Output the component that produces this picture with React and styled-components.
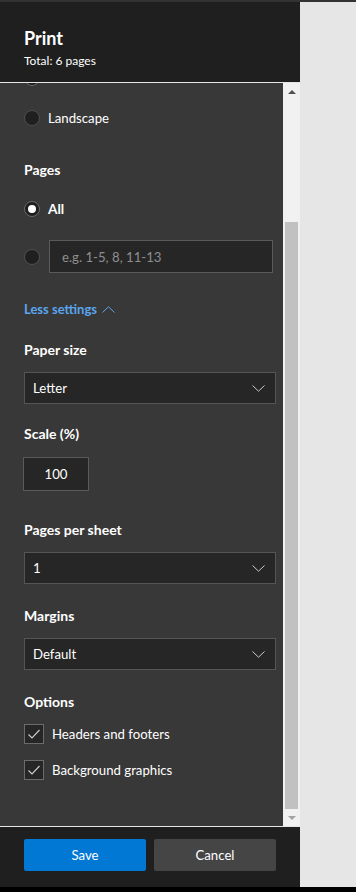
import React from 'react';
import styled, { createGlobalStyle } from 'styled-components';

const Global = createGlobalStyle`
  html, body { margin: 0; padding: 0; background: #e6e6e6; }
  body { font-family: Lato, "Open Sans", sans-serif; color: #fff; }
  * { box-sizing: border-box; }
`;

const TEXT = '13.2px';

const Frame = styled.div`
  width: 356px;
  height: 892px;
  display: flex;
  flex-direction: column;
  overflow: hidden;
`;

const TopStrip = styled.div`
  height: 2px;
  background: #333333;
  flex: none;
`;

const BottomStrip = styled.div`
  height: 5px;
  background: #000;
  flex: none;
`;

const Main = styled.div`
  flex: 1;
  display: flex;
  min-height: 0;
`;

const Panel = styled.div`
  width: 300px;
  flex: none;
  display: flex;
  flex-direction: column;
  background: #383838;
`;

const Backdrop = styled.div`
  flex: 1;
  background: #e6e6e6;
`;

const Header = styled.header`
  height: 80px;
  flex: none;
  background: #1f1f1f;
  padding: 24px 24px 12px;
  display: flex;
  flex-direction: column;
  gap: 3px;
`;

const Title = styled.h1`
  margin: 0;
  font-size: 18px;
  line-height: 24px;
  font-weight: 700;
  color: #fff;
`;

const Subtitle = styled.div`
  font-size: 12px;
  line-height: 16px;
  color: #fff;
`;

const Divider = styled.div`
  height: 1px;
  flex: none;
  background: #e6e6e6;
`;

const Body = styled.div`
  height: 743px;
  flex: none;
  display: flex;
`;

const Viewport = styled.div`
  flex: 1;
  overflow: hidden;
  display: flex;
  flex-direction: column;
  justify-content: flex-end;
  padding: 0 7px 46px 24px;
`;

const Heading = styled.h2`
  margin: ${p => p.$mt || 0}px 0 0;
  font-size: 14px;
  line-height: 20px;
  font-weight: 700;
  color: #fff;
  flex: none;
`;

const RadioRow = styled.label`
  margin-top: ${p => p.$mt || 0}px;
  height: ${p => p.$h || 32}px;
  display: flex;
  align-items: center;
  gap: ${p => p.$gap || 8}px;
  font-size: ${p => (p.$bold ? '13.6px' : TEXT)};
  font-weight: ${p => (p.$bold ? 700 : 400)};
  color: #fff;
  flex: none;
`;

const Radio = styled.span`
  width: 16px;
  height: 16px;
  border-radius: 50%;
  border: 1px solid ${p => (p.$checked ? '#6a6a6a' : '#4f4f4f')};
  background: #1f1f1f;
  display: flex;
  align-items: center;
  justify-content: center;
  flex: none;
  &::after {
    content: '';
    width: 8px;
    height: 8px;
    border-radius: 50%;
    background: ${p => (p.$checked ? '#ffffff' : 'transparent')};
  }
`;

const TextBox = styled.div`
  width: ${p => p.$w}px;
  height: ${p => p.$h || 32}px;
  border: 1px solid #5a5a5a;
  background: #262626;
  display: flex;
  align-items: center;
  justify-content: ${p => (p.$center ? 'center' : 'flex-start')};
  padding: 0 ${p => (p.$center ? 0 : 12)}px;
  margin: ${p => p.$mt || 0}px 0 0 ${p => p.$ml || 0}px;
  font-size: ${TEXT};
  font-weight: 400;
  color: ${p => (p.$placeholder ? '#8f8f8f' : '#fff')};
  flex: none;
`;

const LinkToggle = styled.div`
  margin-top: ${p => p.$mt || 0}px;
  height: 20px;
  display: flex;
  align-items: center;
  gap: 5px;
  font-size: 13px;
  font-weight: 700;
  color: #5aa5ee;
  flex: none;
`;

const Select = styled.div`
  margin-top: ${p => p.$mt || 0}px;
  height: 32px;
  width: 252px;
  border: 1px solid #555555;
  background: #262626;
  display: flex;
  align-items: center;
  justify-content: space-between;
  padding: 0 10px 0 8px;
  font-size: ${TEXT};
  color: #fff;
  flex: none;
`;

const CheckRow = styled.label`
  margin-top: ${p => p.$mt || 0}px;
  height: 20px;
  display: flex;
  align-items: center;
  gap: 8px;
  font-size: ${TEXT};
  color: #fff;
  flex: none;
`;

const CheckBox = styled.span`
  width: 20px;
  height: 20px;
  border: 1px solid #6b6b6b;
  background: #262626;
  display: flex;
  align-items: center;
  justify-content: center;
  flex: none;
`;

const ScrollBar = styled.div`
  width: 17px;
  flex: none;
  background: #f1f1f1;
  display: flex;
  flex-direction: column;
`;

const ScrollButton = styled.div`
  height: 17px;
  flex: none;
  display: flex;
  align-items: center;
  justify-content: center;
`;

const ThumbTrack = styled.div`
  flex: 1;
  display: flex;
  flex-direction: column;
  justify-content: flex-end;
  padding: 0 2px;
`;

const Thumb = styled.div`
  height: ${p => p.$h}px;
  background: #c1c1c1;
`;

const Footer = styled.footer`
  height: 60px;
  flex: none;
  background: #1f1f1f;
  padding: 12px 24px;
  display: flex;
  gap: 8px;
`;

const Button = styled.button`
  width: 122px;
  height: 32px;
  border: none;
  border-radius: 2px;
  background: ${p => (p.$primary ? '#0078d4' : '#454545')};
  color: #fff;
  font-family: inherit;
  font-size: ${TEXT};
  padding: 0;
`;

const Chevron = ({ up, color = '#c8c8c8' }) => (
  <svg width="13" height="7" viewBox="0 0 13 7">
    <path
      d={up ? 'M0.5 6.5 L6.5 0.8 L12.5 6.5' : 'M0.5 0.5 L6.5 6.2 L12.5 0.5'}
      fill="none"
      stroke={color}
      strokeWidth="1"
    />
  </svg>
);

const Check = () => (
  <svg width="14" height="12" viewBox="0 0 14 12">
    <path d="M1.5 6.5 L5 10 L12.5 2" fill="none" stroke="#cfcfcf" strokeWidth="1.1" />
  </svg>
);

const Triangle = ({ down, color }) => (
  <svg width="8" height="4" viewBox="0 0 8 4">
    <polygon points={down ? '0,0 8,0 4,4' : '0,4 8,4 4,0'} fill={color} />
  </svg>
);

export default function App() {
  return (
    <>
      <Global />
      <Frame>
        <TopStrip />
        <Main>
          <Panel>
            <Header>
              <Title>Print</Title>
              <Subtitle>Total: 6 pages</Subtitle>
            </Header>
            <Divider />
            <Body>
              <Viewport>
                <RadioRow aria-label="Portrait">
                  <Radio $checked />
                </RadioRow>
                <RadioRow $mt={8}>
                  <Radio />
                  Landscape
                </RadioRow>

                <Heading $mt={26}>Pages</Heading>
                <RadioRow $mt={13} $bold>
                  <Radio $checked />
                  All
                </RadioRow>
                <RadioRow $mt={15} $h={33} $gap={9}>
                  <Radio />
                  <TextBox $w={224} $h={33} $placeholder>
                    e.g. 1-5, 8, 11-13
                  </TextBox>
                </RadioRow>

                <LinkToggle $mt={26}>
                  Less settings
                  <Chevron up color="#5aa5ee" />
                </LinkToggle>

                <Heading $mt={21}>Paper size</Heading>
                <Select $mt={12}>
                  Letter
                  <Chevron />
                </Select>

                <Heading $mt={20}>Scale (%)</Heading>
                <TextBox $w={66} $h={34} $mt={13} $ml={-1} $center>
                  100
                </TextBox>

                <Heading $mt={29}>Pages per sheet</Heading>
                <Select $mt={12}>
                  1
                  <Chevron />
                </Select>

                <Heading $mt={22}>Margins</Heading>
                <Select $mt={12}>
                  Default
                  <Chevron />
                </Select>

                <Heading $mt={22}>Options</Heading>
                <CheckRow $mt={12}>
                  <CheckBox>
                    <Check />
                  </CheckBox>
                  Headers and footers
                </CheckRow>
                <CheckRow $mt={16}>
                  <CheckBox>
                    <Check />
                  </CheckBox>
                  Background graphics
                </CheckRow>
              </Viewport>
              <ScrollBar>
                <ScrollButton>
                  <Triangle color="#505050" />
                </ScrollButton>
                <ThumbTrack>
                  <Thumb $h={587} />
                </ThumbTrack>
                <ScrollButton>
                  <Triangle down color="#a3a3a3" />
                </ScrollButton>
              </ScrollBar>
            </Body>
            <Divider />
            <Footer>
              <Button $primary>Save</Button>
              <Button>Cancel</Button>
            </Footer>
          </Panel>
          <Backdrop />
        </Main>
        <BottomStrip />
      </Frame>
    </>
  );
}
